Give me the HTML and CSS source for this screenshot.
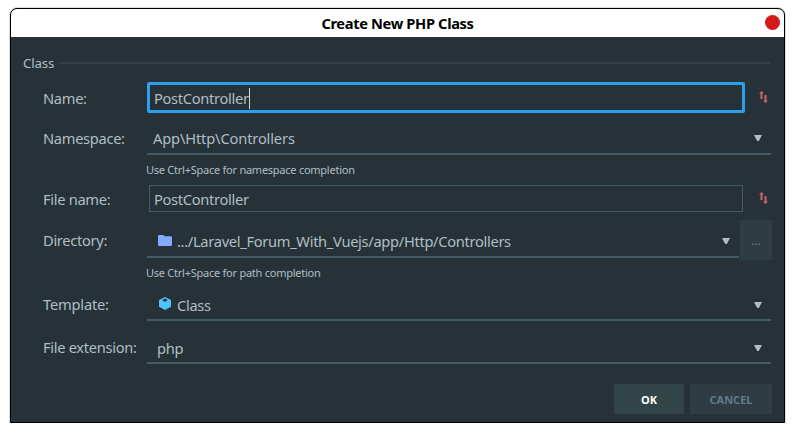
FILE: index.html
```html
<!DOCTYPE html>
<html lang="en">
<head>
<meta charset="utf-8">
<title>Create New PHP Class</title>
<link rel="stylesheet" href="styles.css">
</head>
<body>
<svg class="defs" aria-hidden="true">
  <symbol id="arrow" viewBox="0 0 8 6"><path d="M0 0h8L4.8 6H3.2z"/></symbol>
  <symbol id="swap" viewBox="0 0 10 12"><path d="M2.5 0 5 2.6H3.5V8h-2V2.6H0zM5.5 4h2v5.4H9L6.5 12 4 9.4h1.5z"/></symbol>
</svg>
<main class="window">
  <header class="titlebar">
    <span></span>
    <h1>Create New PHP Class</h1>
    <button class="close" aria-label="Close"></button>
  </header>
  <form class="content">
    <div class="group"><span>Class</span><i class="rule"></i></div>
    <div class="row name">
      <label>Name:</label>
      <div class="field focused"><span>PostController</span><i class="caret"></i></div>
      <svg class="swap"><use href="#swap"/></svg>
    </div>
    <div class="row namespace">
      <label>Namespace:</label>
      <div class="combo"><span>App\Http\Controllers</span><svg class="arrow"><use href="#arrow"/></svg></div>
    </div>
    <p class="hint first">Use Ctrl+Space for namespace completion</p>
    <div class="row file">
      <label>File name:</label>
      <div class="field"><span>PostController</span></div>
      <svg class="swap"><use href="#swap"/></svg>
    </div>
    <div class="row directory">
      <label>Directory:</label>
      <div class="combo">
        <svg class="folder" viewBox="0 0 14 11"><path d="M1.2 0h4L6.6 1.3h6.2q1.2 0 1.2 1.2v7.3q0 1.2-1.2 1.2H1.2Q0 11 0 9.8V1.2Q0 0 1.2 0z"/></svg>
        <span>.../Laravel_Forum_With_Vuejs/app/Http/Controllers</span><svg class="arrow"><use href="#arrow"/></svg>
      </div>
      <button class="browse" type="button">...</button>
    </div>
    <p class="hint second">Use Ctrl+Space for path completion</p>
    <div class="row template">
      <label>Template:</label>
      <div class="combo">
        <svg class="cube" viewBox="0 0 12 13"><path d="M6 0l6 3.1v6.6L6 13 0 9.7V3.1z"/><path class="inner" d="M6 1.5 8.7 3 6 5.1 3.3 3z"/></svg>
        <span>Class</span><svg class="arrow"><use href="#arrow"/></svg>
      </div>
    </div>
    <div class="row extension">
      <label>File extension:</label>
      <div class="combo"><span>php</span><svg class="arrow"><use href="#arrow"/></svg></div>
    </div>
    <footer class="actions">
      <button class="ok" type="button">OK</button>
      <button class="cancel" type="button">CANCEL</button>
    </footer>
  </form>
</main>
</body>
</html>
```
FILE: styles.css
```css
* { box-sizing: border-box; }
body {
  margin: 0;
  padding: 8px 0 0 10px;
  background: #fff;
  font-family: "Noto Sans", sans-serif;
  font-size: 14.67px;
  letter-spacing: -0.31px;
  color: #b0bec5;
}
.defs { position: absolute; width: 0; height: 0; }
button { border: 0; padding: 0; font-family: inherit; }
.window {
  width: 775px;
  height: 415px;
  border: 1px solid #000;
  border-radius: 7px 7px 0 0;
  background: #263238;
  box-shadow: 0 0 0 1px #ddd;
  overflow: hidden;
}
.titlebar {
  display: grid;
  grid-template-columns: 1fr auto 1fr;
  align-items: center;
  height: 28px;
  padding-right: 4px;
  background: #fff;
  color: #000;
}
.titlebar h1 { margin: 0 -2px 0 2px; font-size: 14.67px; line-height: 28px; font-weight: 700; letter-spacing: -0.36px; }
.close { justify-self: end; width: 15px; height: 15px; margin-top: -1px; border-radius: 50%; background: #d41919; }
.content { padding: 16px 12px 0 12px; }
.group { display: flex; align-items: center; height: 20px; font-size: 13.33px; line-height: 20px; letter-spacing: -0.2px; }
.rule { flex: 1; height: 2px; margin: 0 2px 0 6px; background: #314049; }
.row { display: flex; align-items: center; padding-left: 20px; white-space: nowrap; }
.row label { flex: 0 0 104px; line-height: 20px; }
.name { height: 31px; margin-top: 9px; }
.field {
  display: flex;
  align-items: center;
  width: 594px;
  height: 27px;
  margin-left: 2px;
  padding-left: 4px;
  border: 1px solid #425b67;
  line-height: 20px;
}
.field.focused { width: 598px; height: 31px; margin-left: 0; border: 3px solid #2d9fec; border-radius: 2px; padding-top: 1px; }
.caret { width: 1px; height: 21px; background: #cfd8dc; }
.swap { width: 10px; height: 12px; margin: -2px 0 0 14px; fill: #c9666b; }
.file .swap { margin-left: 16px; }
.combo {
  display: flex;
  flex: 1;
  align-items: center;
  height: 33px;
  padding: 1px 9px 0 6px;
  border-bottom: 2px solid #425b67;
  line-height: 20px;
}
.namespace, .template, .extension { height: 33px; padding-right: 1px; }
.namespace { margin-top: 9px; }
.namespace label, .template label, .extension label { margin-top: -1px; }
.namespace .combo { letter-spacing: -0.15px; }
.template label { letter-spacing: -0.2px; }
.arrow { width: 8px; height: 6px; margin-left: auto; fill: #b0bec5; }
.hint { margin: 0; padding-left: 123px; font-size: 11px; line-height: 26px; letter-spacing: -0.25px; }
.hint.first { height: 30px; padding-top: 2px; }
.hint.second { height: 28px; }
.file { height: 27px; }
.directory { height: 40px; margin-top: 8px; }
.directory .combo { height: 36px; padding-top: 4px; padding-left: 11px; }
.folder { width: 14px; height: 11px; margin: -2px 5px 0 0; fill: #82aaff; }
.browse { width: 32px; height: 40px; margin-left: 1px; background: #2e3c43; color: #607d8b; font-size: 12px; }
.cube { width: 12px; height: 13px; margin: -2px 6px 0 0; fill: #4fc3f7; }
.cube .inner { fill: #263238; }
.template .combo { padding-left: 12px; padding-top: 2px; }
.extension { margin-top: 10px; }
.extension .combo { padding-left: 10px; padding-top: 3px; }
.actions { display: flex; justify-content: flex-end; gap: 6px; margin-top: 20px; }
.actions button { height: 30px; font-size: 11px; font-weight: 700; }
.ok { width: 70px; background: #314549; color: #fff; }
.cancel { width: 82px; background: #2e3c43; color: #607d8b; }
```
